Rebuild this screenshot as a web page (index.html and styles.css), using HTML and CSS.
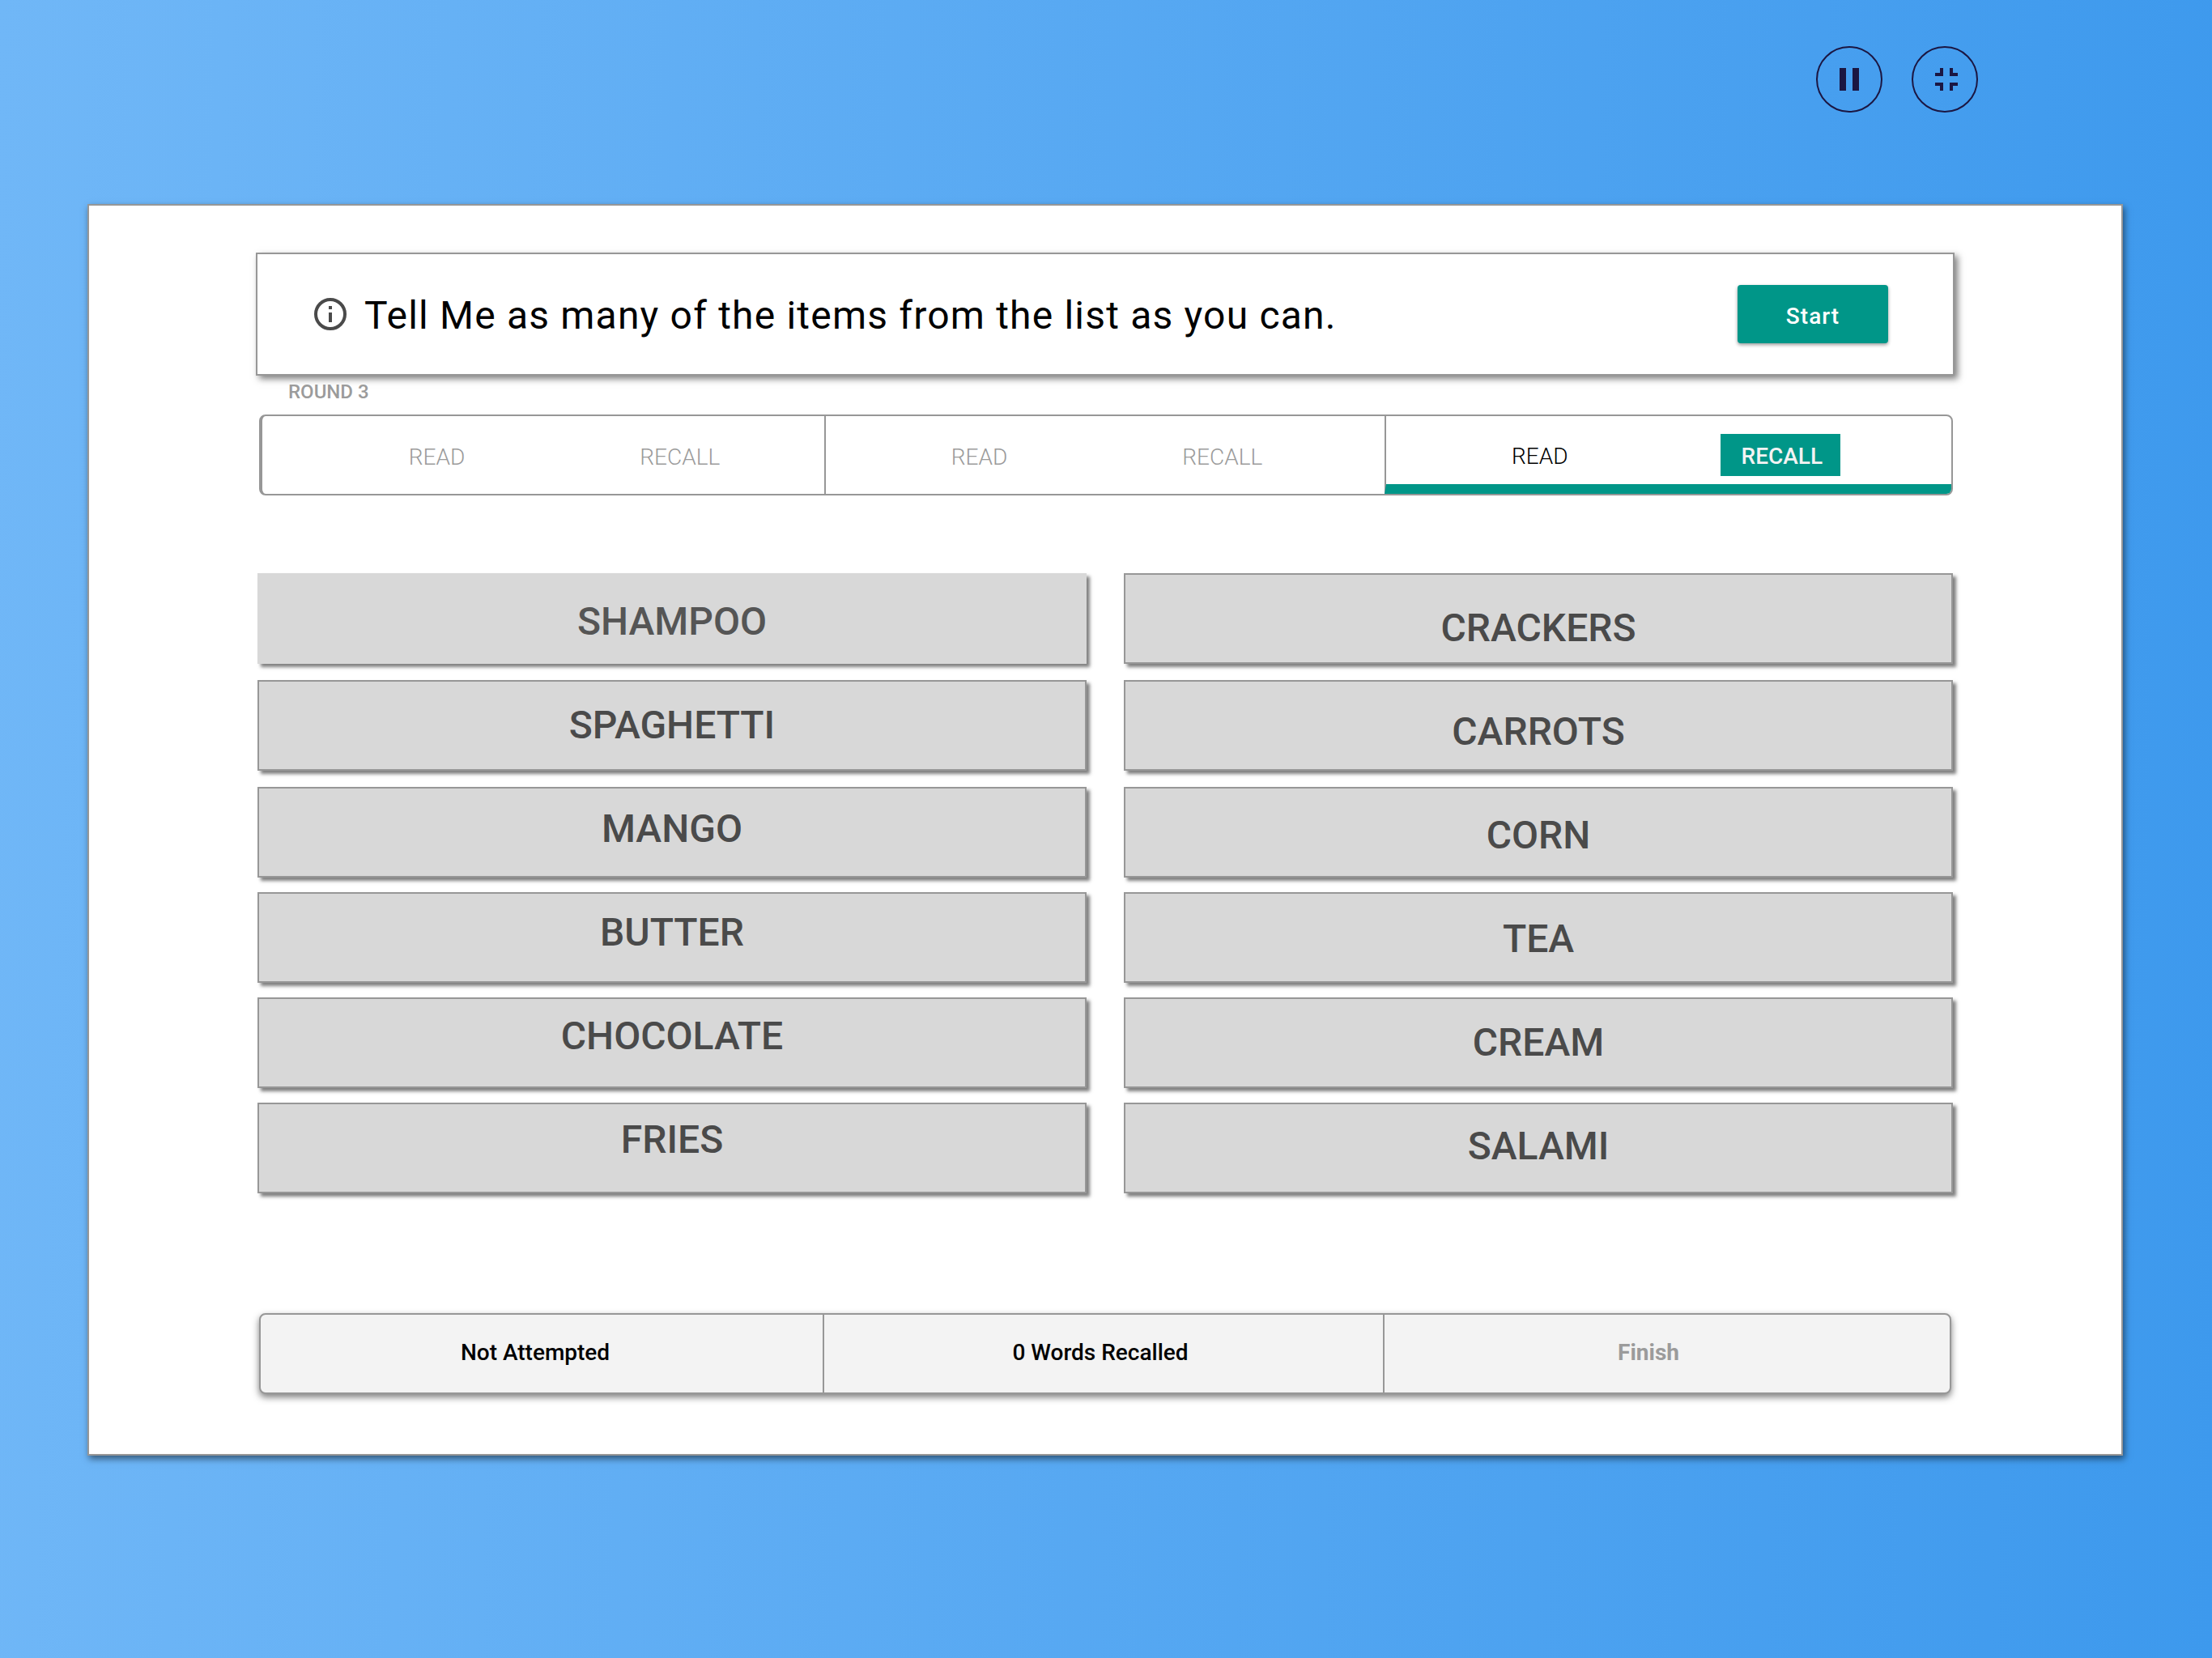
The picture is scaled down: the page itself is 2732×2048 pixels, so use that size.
FILE: index.html
```html
<!DOCTYPE html>
<html lang="en">
<head>
<meta charset="utf-8">
<meta name="viewport" content="width=device-width, initial-scale=1">
<title>Word Recall</title>
<link rel="stylesheet" href="styles.css">
</head>
<body>
<header class="toolbar">
  <button class="round-button" type="button" aria-label="Pause">
    <svg viewBox="0 0 24 28" width="24" height="28" aria-hidden="true"><path d="M0 0h8v28H0zM16 0h8v28h-8z"/></svg>
  </button>
  <button class="round-button" type="button" aria-label="Exit full screen">
    <svg viewBox="0 0 28 28" width="28" height="28" class="exit-icon" aria-hidden="true"><path d="M6 0h4v10H0V6h6zM18 0h4v6h6v4H18zM0 18h10v10H6v-6H0zM18 18h10v4h-6v6h-4z"/></svg>
  </button>
</header>
<main class="card">
  <section class="prompt">
    <svg class="info-icon" viewBox="0 0 40 40" width="40" height="40" aria-hidden="true"><circle cx="20" cy="20" r="18"/><path d="M18 10h4v4h-4zM18 18h4v12h-4z"/></svg>
    <h1 class="prompt-text">Tell Me as many of the items from the list as you can.</h1>
    <button class="start" type="button">Start</button>
  </section>
  <p class="round-label">ROUND 3</p>
  <ol class="rounds">
    <li class="round round-first"><span class="step">READ</span><span class="step">RECALL</span></li>
    <li class="round"><span class="step">READ</span><span class="step">RECALL</span></li>
    <li class="round round-active"><span class="step">READ</span><span class="step step-current">RECALL</span></li>
  </ol>
  <div class="board">
    <div class="column">
      <div class="tiles">
        <button class="tile tile-plain" type="button" id="w1"></button>
        <button class="tile" type="button" id="w2"></button>
        <button class="tile" type="button" id="w3"></button>
        <button class="tile" type="button" id="w4"></button>
        <button class="tile" type="button" id="w5"></button>
        <button class="tile" type="button" id="w6"></button>
      </div>
      <div class="words">
        <label class="word word-soft" for="w1">SHAMPOO</label>
        <label class="word" for="w2">SPAGHETTI</label>
        <label class="word" for="w3">MANGO</label>
        <label class="word" for="w4">BUTTER</label>
        <label class="word" for="w5">CHOCOLATE</label>
        <label class="word" for="w6">FRIES</label>
      </div>
    </div>
    <div class="column">
      <div class="tiles">
        <button class="tile" type="button" id="w7"></button>
        <button class="tile" type="button" id="w8"></button>
        <button class="tile" type="button" id="w9"></button>
        <button class="tile" type="button" id="w10"></button>
        <button class="tile" type="button" id="w11"></button>
        <button class="tile" type="button" id="w12"></button>
      </div>
      <div class="words words-low">
        <label class="word" for="w7">CRACKERS</label>
        <label class="word" for="w8">CARROTS</label>
        <label class="word" for="w9">CORN</label>
        <label class="word" for="w10">TEA</label>
        <label class="word" for="w11">CREAM</label>
        <label class="word" for="w12">SALAMI</label>
      </div>
    </div>
  </div>
  <footer class="actions">
    <button class="action action-skip" type="button">Not Attempted</button>
    <output class="action action-count">0 Words Recalled</output>
    <button class="action action-finish" type="button" disabled>Finish</button>
  </footer>
</main>
</body>
</html>
```
FILE: styles.css
```css
* {
  box-sizing: border-box;
}

body {
  margin: 0;
  min-height: 100vh;
  padding: 57px 110px 250px 108px;
  background: linear-gradient(92deg, #70b7f7 0%, #3d99ed 100%);
  font-family: Roboto, "Liberation Sans", sans-serif;
  color: #000;
}

button {
  font-family: inherit;
  cursor: pointer;
}

.toolbar {
  display: flex;
  justify-content: flex-end;
  gap: 36px;
  padding-right: 179px;
  margin-bottom: 113px;
}

.round-button {
  display: flex;
  align-items: center;
  justify-content: center;
  width: 82px;
  height: 82px;
  padding: 0;
  border: 2px solid #1b1642;
  border-radius: 50%;
  background: none;
  fill: #1b1642;
}

.exit-icon {
  margin-left: 4px;
}

.card {
  padding: 58px 206px 74px;
  border: 2px solid #979797;
  background: #fff;
  box-shadow: 2px 4px 8px rgba(0, 0, 0, 0.5);
}

.prompt {
  display: flex;
  align-items: center;
  height: 152px;
  padding: 0 80px 0 70px;
  border: 2px solid #979797;
  background: #fff;
  box-shadow: 4px 4px 8px rgba(0, 0, 0, 0.5);
}

.info-icon {
  flex: none;
  margin-right: 22px;
  fill: #4a4a4a;
}

.info-icon circle {
  fill: none;
  stroke: #4a4a4a;
  stroke-width: 4;
}

.prompt-text {
  flex: 1;
  margin: 0;
  padding-top: 4px;
  font-size: 48px;
  font-weight: 400;
  line-height: 56px;
  letter-spacing: 0.025em;
}

.start {
  width: 186px;
  height: 72px;
  padding: 4px 0 0;
  border: 0;
  border-radius: 4px;
  background: #009688;
  box-shadow: 0 2px 4px rgba(0, 0, 0, 0.4);
  color: #fff;
  font-size: 28px;
  font-weight: 500;
  letter-spacing: 1px;
}

.round-label {
  margin: 6px 0 14px 40px;
  color: #9b9b9b;
  font-size: 24px;
  font-weight: 500;
  line-height: 28px;
}

.rounds {
  display: grid;
  grid-template-columns: 694px 692px 1fr;
  height: 100px;
  margin: 0 2px 0 4px;
  padding: 0;
  overflow: hidden;
  border: 2px solid #979797;
  border-left-width: 4px;
  border-radius: 8px;
  list-style: none;
}

.round {
  display: flex;
  align-items: center;
  justify-content: center;
  gap: 216px;
  padding: 2px 0 0 4px;
  border-left: 2px solid #979797;
  color: #9b9b9b;
  font-size: 28px;
  font-weight: 300;
  line-height: 32px;
}

.round-first {
  padding-left: 52px;
  border-left: 0;
}

.round-active {
  gap: 188px;
  padding: 12px 0 0 18px;
  border-bottom: 12px solid #009688;
  color: #000;
}

.step {
  padding: 12px 0 8px;
}

.step-current {
  padding-left: 26px;
  padding-right: 22px;
  background: #009688;
  color: #f3f3f3;
  font-weight: 500;
}

.board {
  display: grid;
  grid-template-columns: 1fr 1fr;
  gap: 46px;
  margin: 96px 2px 142px;
}

.column {
  display: grid;
}

.tiles,
.words {
  grid-area: 1 / 1;
  display: flex;
  flex-direction: column;
}

.tiles {
  gap: 18px;
}

.tile {
  height: 112px;
  padding: 0;
  border: 2px solid #979797;
  background: #d8d8d8;
  box-shadow: 4px 4px 4px rgba(0, 0, 0, 0.5);
}

.tile:nth-child(-n + 2) {
  margin-bottom: 2px;
}

.tile-plain {
  border-color: #d8d8d8;
}

.words {
  margin-top: -4px;
}

.word {
  color: #4a4a4a;
  font-size: 48px;
  font-weight: 500;
  line-height: 128px;
  text-align: center;
  cursor: pointer;
}

.word-soft {
  color: #555;
}

.words-low {
  padding-top: 8px;
}

.actions {
  display: grid;
  grid-template-columns: 694px 692px 1fr;
  height: 100px;
  margin: 0 4px;
  overflow: hidden;
  border: 2px solid #979797;
  border-radius: 8px;
  background: #f3f3f3;
  box-shadow: 0 4px 8px rgba(0, 0, 0, 0.5);
}

.action {
  display: flex;
  align-items: center;
  justify-content: center;
  padding: 0 0 4px;
  border: 0;
  border-left: 2px solid #979797;
  background: none;
  color: #000;
  font-size: 28px;
  font-weight: 500;
}

.action-skip {
  padding-right: 16px;
  border-left: 0;
}

.action-count {
  padding-right: 8px;
}

.action-finish {
  padding-right: 46px;
  color: #9b9b9b;
  font-weight: 700;
  cursor: default;
}
```
